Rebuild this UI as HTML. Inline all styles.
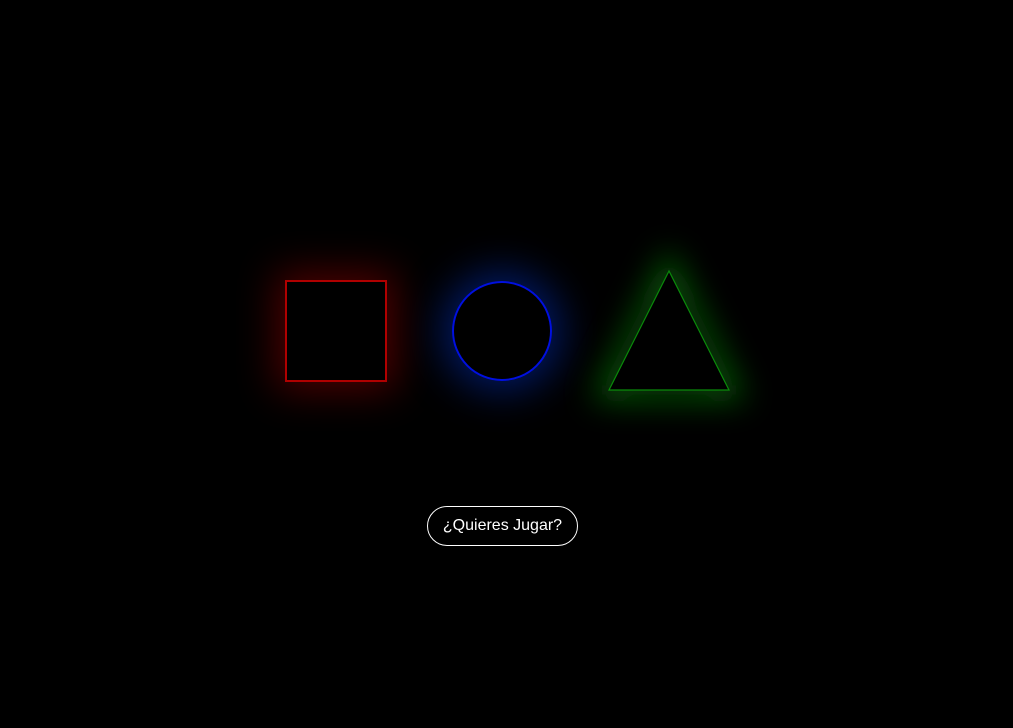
<!DOCTYPE html>
<html><head><meta charset="utf-8"><style>
html,body{margin:0;padding:0;background:#000;width:1013px;height:728px;overflow:hidden;position:relative}
.sq{position:absolute;left:285px;top:280px;width:98px;height:98px;border:2px solid #b00000;box-shadow:0 0 40px 8px rgba(170,0,0,.45)}
.ci{position:absolute;left:452px;top:281px;width:96px;height:96px;border:2px solid #0010e0;border-radius:50%;box-shadow:0 0 40px 10px rgba(0,50,200,.5)}
svg{position:absolute;left:0;top:0}
.btn{position:absolute;left:427px;top:506px;width:149px;height:38px;border:1px solid #fff;border-radius:20px;color:#fff;font:16px "Liberation Sans",Arial,sans-serif;display:flex;align-items:center;justify-content:center;box-sizing:content-box}
</style></head><body>
<div class="sq"></div>
<div class="ci"></div>
<svg width="1013" height="728">
<defs><filter id="g" x="-50%" y="-50%" width="200%" height="200%"><feGaussianBlur stdDeviation="16"/></filter></defs>
<polygon points="669,271 609,390 729,390" fill="none" stroke="#0a8a0a" stroke-width="22" opacity=".6" filter="url(#g)"/>
<polygon points="669,271 609,390 729,390" fill="#000" stroke="#0a8a0a" stroke-width="1.2"/>
</svg>
<div class="btn">¿Quieres Jugar?</div>
</body></html>
